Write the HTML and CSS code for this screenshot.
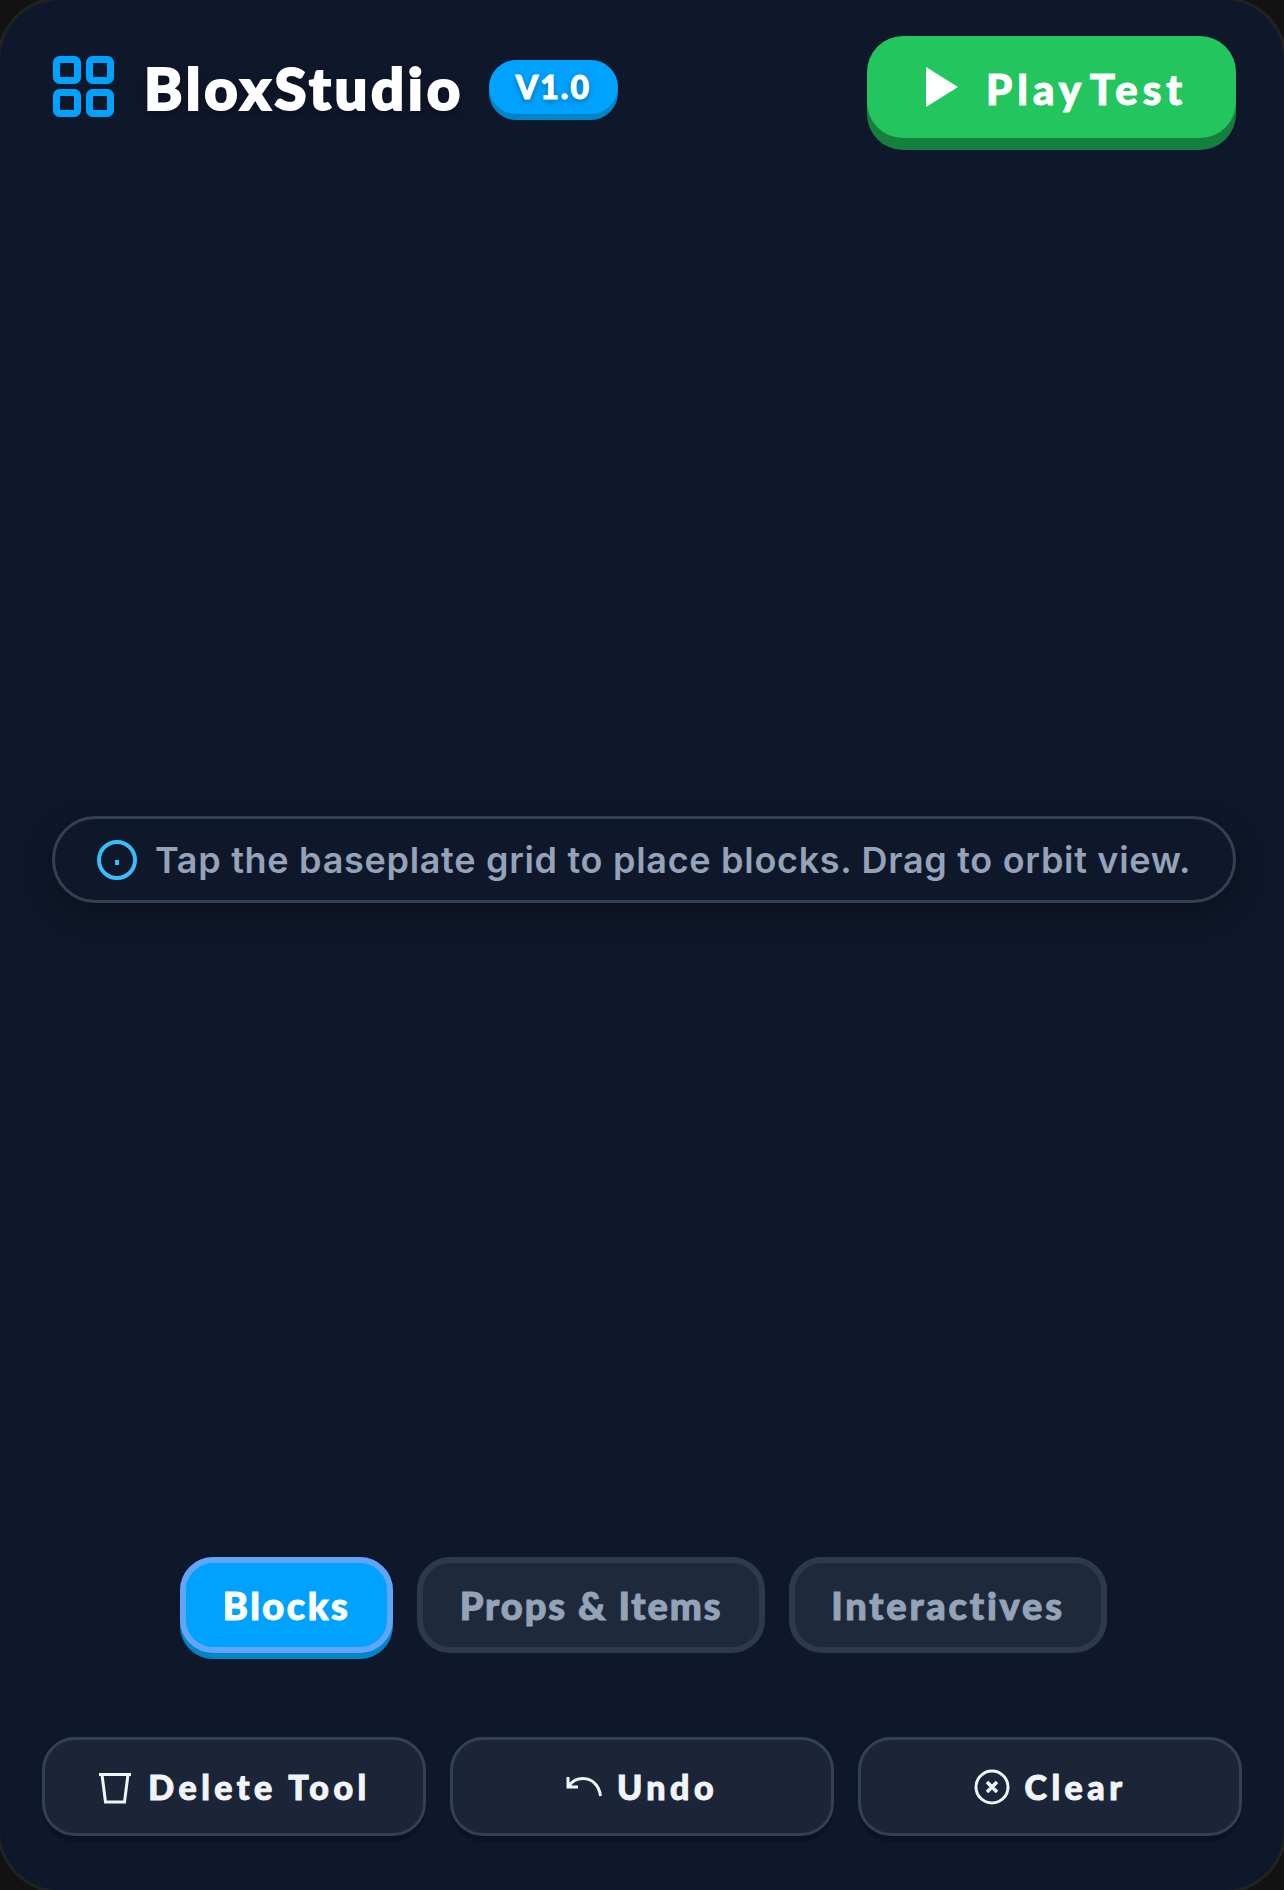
FILE: index.html
```html
<!DOCTYPE html>
<html>
<head>
<title>BloxStudio</title>
<link rel="stylesheet" href="styles.css">
</head>
<body>
<div class="frame">
  <div class="topbar">
    <div class="brand">
      <svg class="logo" viewBox="0 0 62 62" fill="none" stroke="#00a2ff" stroke-width="7">
        <rect x="3.500" y="3.500" width="21" height="21" rx="3"/>
        <rect x="36.500" y="3.500" width="21" height="21" rx="3"/>
        <rect x="3.500" y="36.500" width="21" height="21" rx="3"/>
        <rect x="36.500" y="36.500" width="21" height="21" rx="3"/>
      </svg>
      <span class="title">BloxStudio</span>
      <span class="badge">V1.0</span>
    </div>
    <button class="play">
      <svg class="play-icon" viewBox="0 0 32 40"><polygon points="0,0 32,20 0,40" fill="#fff"/></svg>
      <span class="play-label">Play Test</span>
    </button>
  </div>

  <div class="stage">
    <div class="hint">
      <svg class="hint-icon" viewBox="0 0 40 40" fill="none" stroke="#38bdf8" stroke-width="4">
        <circle cx="20" cy="20" r="18"/>
        <path d="M20 20v5"/>
      </svg>
      <span>Tap the baseplate grid to place blocks. Drag to orbit view.</span>
    </div>
  </div>

  <div class="tabs">
    <button class="tab tab-blocks active">Blocks</button>
    <button class="tab tab-props">Props &amp; Items</button>
    <button class="tab tab-inter">Interactives</button>
  </div>

  <div class="actions">
    <button class="action">
      <svg class="action-icon" viewBox="0 0 36 36" fill="none" stroke="#f1f5f9" stroke-width="3">
        <path d="M2 5.500H34M5 5.500L8.500 33H27.500L31 5.500"/>
      </svg>
      <span>Delete Tool</span>
    </button>
    <button class="action">
      <svg class="action-icon" viewBox="0 0 36 36" fill="none" stroke="#f1f5f9" stroke-width="3">
        <path d="M2 8V18H12M2.500 17.500C6 12 11 9.500 17 9.500C26 9.500 33 16 34.500 27"/>
      </svg>
      <span>Undo</span>
    </button>
    <button class="action">
      <svg class="action-icon" viewBox="0 0 36 36" fill="none" stroke="#f1f5f9" stroke-width="3">
        <circle cx="18" cy="18" r="16"/>
        <path d="M13 13L23 23M23 13L13 23" stroke-width="3.500"/>
      </svg>
      <span>Clear</span>
    </button>
  </div>
</div>
</body>
</html>
```

FILE: styles.css
```css
html, body {
  margin: 0;
  height: 100%;
  background: #121212;
  overflow: hidden;
}

button {
  border: 0;
  margin: 0;
  cursor: pointer;
  font: inherit;
  -webkit-text-stroke: inherit;
}

.frame {
  box-sizing: border-box;
  height: 1890px;
  padding: 36px 42px 54px;
  border-radius: 60px;
  background: #0f172a;
  box-shadow: 0 0 0 3px #222;
  display: flex;
  flex-direction: column;
  font-family: Lato, "Noto Sans", sans-serif;
  font-weight: 900;
  -webkit-text-stroke: 1px;
}

/* top bar */
.topbar {
  display: flex;
  justify-content: space-between;
  align-items: flex-start;
  height: 126px;
  padding: 0 6px 0 11px;
  flex-shrink: 0;
}

.brand {
  display: flex;
  align-items: center;
  height: 90px;
  margin-top: 6px;
}

.logo {
  width: 62px;
  height: 62px;
  margin-right: 29px;
}

.title {
  font-size: 58px;
  color: #fff;
  letter-spacing: 3.700px;
  -webkit-text-stroke: 2px;
  text-shadow: 0 4px 8px rgba(0,0,0,.4);
  margin-right: 25px;
}

.badge {
  padding: 0 27px;
  height: 54px;
  line-height: 54px;
  border-radius: 27px;
  background: #00a2ff;
  box-shadow: 0 6px 0 #0284c7;
  color: #fff;
  font-size: 32px;
  letter-spacing: 2px;
  text-shadow: 0 3px 6px rgba(0,0,0,.35);
}

.play {
  display: flex;
  align-items: center;
  height: 102px;
  width: 369px;
  padding: 0 0 0 59px;
  border-radius: 36px;
  background: #22c55e;
  box-shadow: 0 12px 0 #15803d;
  color: #fff;
  font-size: 42px;
  letter-spacing: 5px;
  word-spacing: -9px;
}

.play-icon {
  width: 32px;
  height: 40px;
  margin-right: 28px;
}

.play-label {
  padding-top: 4px;
}

/* middle */
.stage {
  flex: 1;
  display: flex;
  align-items: center;
  padding: 0 6px 0 10px;
}

.hint {
  flex: 1;
  box-sizing: border-box;
  height: 87px;
  display: flex;
  align-items: center;
  padding: 0 42px;
  border: 3px solid #334155;
  border-radius: 44px;
  background: #0f172a;
  box-shadow: 0 10px 30px rgba(0,0,0,.3);
  color: #94a3b8;
  font-family: Inter, sans-serif;
  font-weight: 600;
  font-size: 36px;
  letter-spacing: .7px;
  white-space: nowrap;
  -webkit-text-stroke: 0;
}

.hint-icon {
  width: 40px;
  height: 40px;
  margin-right: 18px;
  flex-shrink: 0;
}

/* category tabs */
.tabs {
  display: flex;
  justify-content: center;
  gap: 24px;
  margin-bottom: 84px;
  padding-left: 3px;
}

.tab {
  box-sizing: border-box;
  height: 96px;
  border: 6px solid #2d3a4a;
  border-radius: 33px;
  background: #1e293b;
  color: #94a3b8;
  font-size: 38px;
  letter-spacing: 2.500px;
}

.tab-blocks {
  width: 213px;
}

.tab-props {
  width: 348px;
  letter-spacing: 1.900px;
}

.tab-inter {
  width: 318px;
  letter-spacing: 2.800px;
}

.tab.active {
  border-color: #60a5fa;
  background: #00a2ff;
  box-shadow: 0 6px 0 #0284c7;
  color: #fff;
}

/* bottom buttons */
.actions {
  display: grid;
  grid-template-columns: 1fr 1fr 1fr;
  gap: 24px;
}

.action {
  box-sizing: border-box;
  height: 99px;
  display: flex;
  align-items: center;
  justify-content: center;
  gap: 15px;
  border: 3px solid #334155;
  border-radius: 33px;
  background: #1c2438;
  box-shadow: 0 6px 0 rgba(0,0,0,.2);
  color: #f1f5f9;
  font-size: 34px;
  letter-spacing: 4.500px;
}

.action-icon {
  width: 36px;
  height: 36px;
  flex-shrink: 0;
}
```
